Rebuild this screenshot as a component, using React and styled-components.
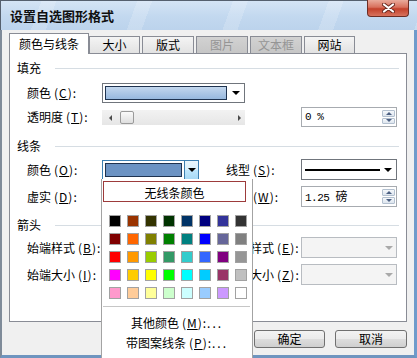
import React from "react";
import styled, { createGlobalStyle } from "styled-components";

const GlobalStyle = createGlobalStyle`
  html, body {
    margin: 0;
    padding: 0;
    background: #fff;
  }
  body {
    font-family: "Noto Sans CJK SC", "Noto Sans", sans-serif;
    font-size: 12px;
    color: #000;
  }
  * {
    box-sizing: border-box;
  }
`;

const palette = [
    ["#000000", "#993300", "#333300", "#003300", "#003366", "#000080", "#333399", "#333333"],
    ["#800000", "#FF6600", "#808000", "#008000", "#008080", "#0000FF", "#666699", "#808080"],
    ["#FF0000", "#FF9900", "#99CC00", "#339966", "#33CCCC", "#3366FF", "#800080", "#969696"],
    ["#FF00FF", "#FFCC00", "#FFFF00", "#00FF00", "#00FFFF", "#00CCFF", "#993366", "#C0C0C0"],
    ["#FF99CC", "#FFCC99", "#FFFF99", "#CCFFCC", "#CCFFFF", "#99CCFF", "#CC99FF", "#FFFFFF"],
];

const tabs = [
    { label: "颜色与线条", w: 80, gap: 0, active: true },
    { label: "大小", w: 51, gap: 0 },
    { label: "版式", w: 52, gap: 2 },
    { label: "图片", w: 52, gap: 2, disabled: true },
    { label: "文本框", w: 52, gap: 2, disabled: true },
    { label: "网站", w: 51, gap: 2 },
];

const Window = styled.div`
    position: relative;
    width: 417px;
    height: 358px;
    overflow: hidden;
    display: flex;
    flex-direction: column;
    background: #f0f0f0;
`;

const TitleBar = styled.div`
    height: 30px;
    flex: none;
    display: flex;
    align-items: center;
    justify-content: space-between;
    padding: 0 8px 0 9px;
    border-top: 1px solid #55606e;
    border-left: 1px solid #55606e;
    background:
        repeating-linear-gradient(110deg, rgba(255, 255, 255, 0) 0 38px, rgba(255, 255, 255, 0.18) 38px 52px, rgba(255, 255, 255, 0) 52px 90px),
        linear-gradient(180deg, #d4e4f5 0%, #c2d8ef 55%, #bcd3ec 100%);
`;

const Title = styled.div`
    font-size: 13px;
    font-weight: 700;
    line-height: 16px;
    color: #101010;
    margin-top: 1px;
`;

const CloseButton = styled.div`
    align-self: flex-start;
    width: 42px;
    height: 17px;
    margin-top: -1px;
    display: flex;
    align-items: center;
    justify-content: center;
    border: 1px solid #6d2d24;
    border-top: none;
    border-radius: 0 0 4px 4px;
    background: linear-gradient(180deg, #e9ab9c 0%, #d8705c 45%, #c3412b 55%, #d8735e 100%);
`;

const Body = styled.div`
    flex: 1;
    display: flex;
    flex-direction: column;
    padding: 0 7px 0 7px;
    border-left: 2px solid #7f8b99;
    border-right: 3px solid #6f9bcb;
    border-bottom: 3px solid #6f95bf;
`;

const TabStrip = styled.div`
    position: relative;
    z-index: 1;
    display: flex;
    align-items: flex-end;
    height: 20px;
    margin-top: 3px;
`;

const Tab = styled.div`
    width: ${(p) => p.$w}px;
    height: ${(p) => (p.$active ? 21 : 17)}px;
    margin-left: ${(p) => p.$gap}px;
    margin-bottom: ${(p) => (p.$active ? -1 : 0)}px;
    display: flex;
    align-items: center;
    justify-content: center;
    border: 1px solid #898c95;
    border-bottom: none;
    font-size: 12px;
    line-height: 14px;
    color: ${(p) => (p.$disabled ? "#959595" : "#000")};
    background: ${(p) =>
        p.$active
            ? "#fff"
            : p.$disabled
            ? "linear-gradient(180deg, #d2d2d2, #c6c6c6)"
            : "linear-gradient(180deg, #f4f4f4, #e2e2e2)"};
`;

const Panel = styled.div`
    width: 398px;
    height: 269px;
    border: 1px solid #898c95;
    background: #fff;
    padding: 0 7px;
    display: flex;
    flex-direction: column;
`;

const SectionHeader = styled.div`
    display: flex;
    align-items: center;
    height: 14px;
    margin-top: ${(p) => p.$mt}px;
    line-height: 14px;
`;

const SectionTitle = styled.span`
    width: 38px;
    flex: none;
`;

const SectionLine = styled.div`
    flex: 1;
    height: 1px;
    background: #d6dde3;
`;

const FieldRow = styled.div`
    display: grid;
    grid-template-columns: 75px 97px 27px 75px 96px;
    align-items: center;
    height: 20px;
    margin-top: ${(p) => p.$mt}px;
    margin-left: 10px;
`;

const Label = styled.span`
    line-height: 14px;
    white-space: nowrap;
    grid-column: ${(p) => p.$col || "auto"};
`;

const Paren = styled.span`
    margin-left: 3px;
    letter-spacing: 1px;
`;

const ComboBox = styled.div`
    width: ${(p) => p.$w}px;
    height: 20px;
    display: flex;
    align-items: stretch;
    background: #fff;
    border: 1px solid ${(p) => (p.$focus ? "#3c7fb1" : "#70757c")};
    grid-column: ${(p) => p.$col || "auto"};
`;

const Swatch = styled.div`
    flex: 1;
    margin: 2px ${(p) => (p.$focus ? 2 : 1)}px 2px 2px;
    border: 1px solid #1f3350;
    background: ${(p) => p.$bg};
`;

const ArrowBox = styled.div`
    width: ${(p) => (p.$focus ? 14 : 16)}px;
    flex: none;
    display: flex;
    align-items: center;
    justify-content: center;
    border-left: ${(p) => (p.$focus ? "1px solid #3c7fb1" : "none")};
    background: ${(p) => (p.$focus ? "linear-gradient(180deg, #eaf6fd 0%, #d9f0fc 50%, #bee6fd 51%, #a7d9f5 100%)" : "transparent")};
`;

const Caret = styled.div`
    width: 0;
    height: 0;
    border-left: 4px solid transparent;
    border-right: 4px solid transparent;
    border-top: 4px solid ${(p) => (p.$muted ? "#a9a9a9" : "#000")};
`;

const LineCombo = styled.div`
    width: 96px;
    height: 21px;
    display: flex;
    align-items: center;
    background: #fff;
    border: 1px solid #70757c;
    grid-column: 5;
`;

const LineSample = styled.div`
    flex: 1;
    height: 2px;
    margin-left: 3px;
    background: #000;
`;

const DisabledCombo = styled.div`
    width: ${(p) => p.$w}px;
    height: 21px;
    display: flex;
    align-items: center;
    justify-content: flex-end;
    padding-right: 3px;
    background: #f4f4f4;
    border: 1px solid #b8bcc1;
    grid-column: ${(p) => p.$col || "auto"};
`;

const Slider = styled.div`
    width: 143px;
    height: 15px;
    display: flex;
    align-items: center;
    padding: 0 4px;
    background: linear-gradient(180deg, #f2f2f2, #e6e6e6);
    grid-column: 2 / 4;
    margin-top: 1px;
`;

const SliderArrow = styled.div`
    width: 0;
    height: 0;
    border-top: 3px solid transparent;
    border-bottom: 3px solid transparent;
    ${(p) => (p.$dir === "left" ? "border-right: 3px solid #4a4a4a;" : "border-left: 3px solid #4a4a4a;")}
    margin-left: ${(p) => (p.$dir === "left" ? 3 : 0)}px;
`;

const Thumb = styled.div`
    width: 14px;
    height: 13px;
    margin-left: 8px;
    border: 1px solid #9a9a9a;
    border-radius: 2px;
    background: linear-gradient(180deg, #fafafa, #dedede);
`;

const Spacer = styled.div`
    flex: 1;
`;

const SpinBox = styled.div`
    width: 96px;
    height: ${(p) => p.$h}px;
    display: flex;
    align-items: center;
    padding: 1px 1px 1px 3px;
    background: #fff;
    border: 1px solid #a7abb0;
    grid-column: 5;
`;

const SpinValue = styled.span`
    flex: 1;
    font-family: "Liberation Mono", "Noto Sans CJK SC", monospace;
    font-size: 11px;
    line-height: 14px;
    letter-spacing: -0.5px;
`;

const SpinCjk = styled.span`
    font-family: "Noto Sans CJK SC", sans-serif;
    font-size: 12px;
    letter-spacing: 0;
`;

const SpinButtons = styled.div`
    width: 13px;
    height: 100%;
    display: flex;
    flex-direction: column;
    gap: 1px;
    padding: 1px 0;
`;

const SpinButton = styled.div`
    flex: 1;
    display: flex;
    align-items: center;
    justify-content: center;
    border: 1px solid #b3c0cf;
    border-radius: 1px;
    background: linear-gradient(180deg, #f5f8fb, #dde5ee);
`;

const SpinTri = styled.div`
    width: 0;
    height: 0;
    border-left: 3px solid transparent;
    border-right: 3px solid transparent;
    ${(p) => (p.$up ? "border-bottom: 3px solid #4b5f82;" : "border-top: 3px solid #4b5f82;")}
`;

const ButtonRow = styled.div`
    display: flex;
    justify-content: flex-end;
    gap: 10px;
    margin-top: 8px;
`;

const DialogButton = styled.div`
    width: ${(p) => p.$w}px;
    height: 18px;
    display: flex;
    align-items: center;
    justify-content: center;
    border: 1px solid #707070;
    border-radius: 3px;
    line-height: 14px;
    background: linear-gradient(180deg, #f3f3f3 0%, #ebebeb 48%, #dddddd 52%, #cfcfcf 100%);
`;

const Popup = styled.div`
    position: absolute;
    left: 101px;
    top: 179px;
    width: 152px;
    height: 179px;
    z-index: 5;
    display: flex;
    flex-direction: column;
    background: #fff;
    border-left: 1px solid #a3a3a3;
    border-right: 1px solid #a3a3a3;
`;

const NoColorButton = styled.div`
    width: 143px;
    height: 21px;
    margin: 2px 0 0 1px;
    display: flex;
    align-items: flex-end;
    justify-content: center;
    padding-bottom: 1px;
    border: 1px solid #9d3b3b;
    line-height: 14px;
`;

const ColorGrid = styled.div`
    display: grid;
    grid-template-columns: repeat(8, 12px);
    grid-auto-rows: 12px;
    gap: 6px;
    margin: 13px 0 0 7px;
`;

const ColorCell = styled.div`
    border: 1px solid #a2a2a2;
    background: ${(p) => p.$c};
`;

const PopupDivider = styled.div`
    height: 1px;
    margin: 7px 2px 0 1px;
    background: #c6c6c6;
`;

const MenuItem = styled.div`
    height: 20px;
    line-height: 20px;
    text-align: center;
    margin-top: ${(p) => p.$mt || 0}px;
`;

const Dots = styled.span`
    letter-spacing: 2px;
`;

function Key({ k }) {
    return (
        <Paren>
            (<u>{k}</u>):
        </Paren>
    );
}

export default function App() {
    return (
        <>
            <GlobalStyle />
            <Window>
                <TitleBar>
                    <Title>设置自选图形格式</Title>
                    <CloseButton>
                        <svg width="13" height="10" viewBox="0 0 13 10">
                            <path d="M2 1.5 L11 8.5 M11 1.5 L2 8.5" stroke="#6b2a20" strokeWidth="4" strokeLinecap="round" />
                            <path d="M2 1.5 L11 8.5 M11 1.5 L2 8.5" stroke="#ffffff" strokeWidth="2.2" strokeLinecap="round" />
                        </svg>
                    </CloseButton>
                </TitleBar>
                <Body>
                    <TabStrip>
                        {tabs.map((t) => (
                            <Tab key={t.label} $w={t.w} $gap={t.gap} $active={t.active} $disabled={t.disabled}>
                                {t.label}
                            </Tab>
                        ))}
                    </TabStrip>
                    <Panel>
                        <SectionHeader $mt={7}>
                            <SectionTitle>填充</SectionTitle>
                            <SectionLine />
                        </SectionHeader>
                        <FieldRow $mt={8}>
                            <Label>
                                颜色<Key k="C" />
                            </Label>
                            <ComboBox $w={143} $col="2 / 5">
                                <Swatch $bg="linear-gradient(180deg, #c3d7ee, #97b8de)" />
                                <ArrowBox>
                                    <Caret />
                                </ArrowBox>
                            </ComboBox>
                        </FieldRow>
                        <FieldRow $mt={4}>
                            <Label>
                                透明度<Key k="T" />
                            </Label>
                            <Slider>
                                <SliderArrow $dir="left" />
                                <Thumb />
                                <Spacer />
                                <SliderArrow $dir="right" />
                            </Slider>
                            <SpinBox $h={20}>
                                <SpinValue>0 %</SpinValue>
                                <SpinButtons>
                                    <SpinButton>
                                        <SpinTri $up />
                                    </SpinButton>
                                    <SpinButton>
                                        <SpinTri />
                                    </SpinButton>
                                </SpinButtons>
                            </SpinBox>
                        </FieldRow>

                        <SectionHeader $mt={12}>
                            <SectionTitle>线条</SectionTitle>
                            <SectionLine />
                        </SectionHeader>
                        <FieldRow $mt={6}>
                            <Label>
                                颜色<Key k="O" />
                            </Label>
                            <ComboBox $w={97} $focus>
                                <Swatch $focus $bg="#6c93c3" />
                                <ArrowBox $focus>
                                    <Caret />
                                </ArrowBox>
                            </ComboBox>
                            <Label $col="4">
                                线型<Key k="S" />
                            </Label>
                            <LineCombo>
                                <LineSample />
                                <ArrowBox>
                                    <Caret />
                                </ArrowBox>
                            </LineCombo>
                        </FieldRow>
                        <FieldRow $mt={7}>
                            <Label>
                                虚实<Key k="D" />
                            </Label>
                            <DisabledCombo $w={97} />
                            <Label $col="4">
                                粗细<Key k="W" />
                            </Label>
                            <SpinBox $h={21}>
                                <SpinValue>
                                    1.25 <SpinCjk>磅</SpinCjk>
                                </SpinValue>
                                <SpinButtons>
                                    <SpinButton>
                                        <SpinTri $up />
                                    </SpinButton>
                                    <SpinButton>
                                        <SpinTri />
                                    </SpinButton>
                                </SpinButtons>
                            </SpinBox>
                        </FieldRow>

                        <SectionHeader $mt={12}>
                            <SectionTitle>箭头</SectionTitle>
                            <SectionLine />
                        </SectionHeader>
                        <FieldRow $mt={5}>
                            <Label>
                                始端样式<Key k="B" />
                            </Label>
                            <DisabledCombo $w={97} />
                            <Label $col="4">
                                末端样式<Key k="E" />
                            </Label>
                            <DisabledCombo $w={96} $col="5">
                                <Caret $muted />
                            </DisabledCombo>
                        </FieldRow>
                        <FieldRow $mt={7}>
                            <Label>
                                始端大小<Key k="I" />
                            </Label>
                            <DisabledCombo $w={97} />
                            <Label $col="4">
                                末端大小<Key k="Z" />
                            </Label>
                            <DisabledCombo $w={96} $col="5">
                                <Caret $muted />
                            </DisabledCombo>
                        </FieldRow>
                    </Panel>
                    <ButtonRow>
                        <DialogButton $w={71}>确定</DialogButton>
                        <DialogButton $w={72}>取消</DialogButton>
                    </ButtonRow>
                </Body>

                <Popup>
                    <NoColorButton>无线条颜色</NoColorButton>
                    <ColorGrid>
                        {palette.flat().map((c, i) => (
                            <ColorCell key={i} $c={c} />
                        ))}
                    </ColorGrid>
                    <PopupDivider />
                    <MenuItem $mt={6}>
                        其他颜色<Key k="M" />
                        <Dots>...</Dots>
                    </MenuItem>
                    <MenuItem>
                        带图案线条<Key k="P" />
                        <Dots>...</Dots>
                    </MenuItem>
                </Popup>
            </Window>
        </>
    );
}
